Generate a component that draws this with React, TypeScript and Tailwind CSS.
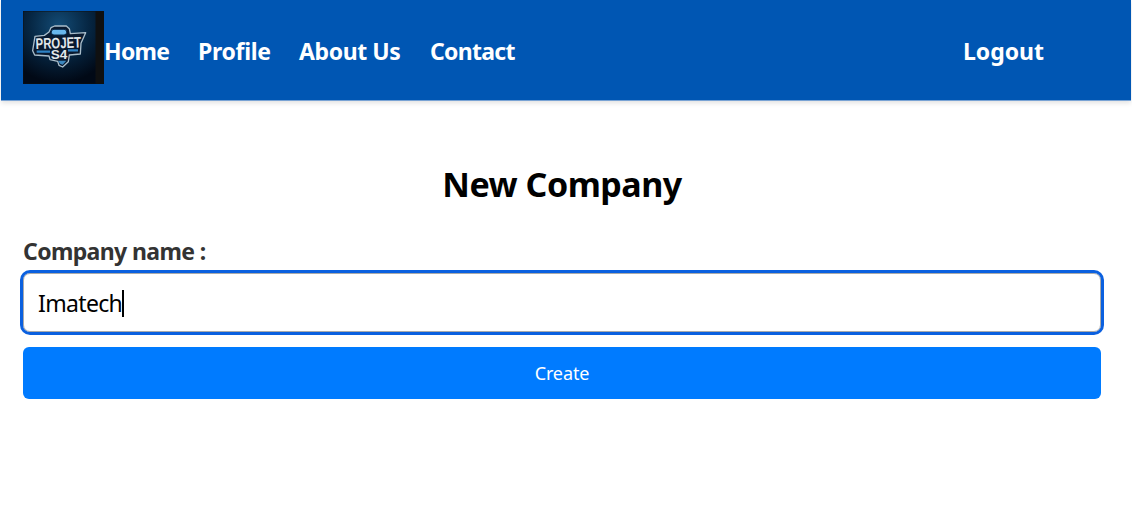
import React from "react";

function Logo() {
  return (
    <svg width="81" height="73" viewBox="0 0 81 73" className="shrink-0" aria-label="Projet S4">
      <defs>
        <radialGradient id="glow" cx="36" cy="14" r="58" gradientUnits="userSpaceOnUse">
          <stop offset="0" stopColor="#134b75" />
          <stop offset="0.5" stopColor="#062744" />
          <stop offset="1" stopColor="#010916" />
        </radialGradient>
      </defs>
      <rect width="81" height="73" fill="#0f1011" />
      <rect x="0.500" y="0.500" width="72" height="72" fill="url(#glow)" />
      <g transform="translate(-23 -11) scale(.33333)">
        <path d="M147 96 153 83 164 78H199L208 86 211 101 257 98 243 130 241 162 208 165 205 185 188 201 177 196 173 184 150 179 147 168 104 165 98 152 105 109 133 106Z" fill="#091a30" stroke="#a9bdca" strokeWidth="4" strokeLinejoin="round" />
        <rect x="154" y="88" width="46" height="17" rx="8" fill="#69b7ec" stroke="#0a2a4a" strokeWidth="3" />
        <path d="M110 155H150M204 151H234" stroke="#2e83c5" strokeWidth="7" />
        <path d="M174 182h25l-11 12-8-3z" fill="#3b86bd" />
        <g fill="#e2e7ea" fontFamily="Liberation Sans, sans-serif" fontWeight="700">
          <text x="107" y="145" fontSize="46" textLength="136" lengthAdjust="spacingAndGlyphs" transform="rotate(-2 175 130)">PROJET</text>
          <text x="152" y="177" fontSize="36" textLength="50" lengthAdjust="spacingAndGlyphs">S4</text>
        </g>
      </g>
    </svg>
  );
}

export default function App() {
  return (
    <div className="h-[528px] w-[1132px] overflow-hidden bg-white px-px font-['Noto_Sans',sans-serif]">
      <header className="flex h-[101px] items-start border-b border-[#79a3d4] bg-[#0056b3] pt-[11px] pl-[22px] text-[23px] leading-8 font-bold text-white shadow-[0_2px_5px_rgba(0,0,0,0.12)]">
        <Logo />
        <nav className="flex flex-1 pt-6 whitespace-nowrap">
          <a className="w-[94px] tracking-[-0.7px]">Home</a>
          <a className="w-[101px] tracking-[-0.3px]">Profile</a>
          <a className="w-[131px] tracking-[-0.4px]">About Us</a>
          <a className="tracking-[-0.7px]">Contact</a>
          <a className="mr-[87px] ml-auto">Logout</a>
        </nav>
      </header>
      <main className="pr-[30px] pl-[22px]">
        <h1 className="mt-[59px] text-center text-[34px] leading-[48px] font-bold tracking-[-0.5px] text-black">New Company</h1>
        <label className="mt-[27px] block text-[23px] leading-8 font-bold tracking-[-0.62px] text-[#333]">Company name :</label>
        <div className="mt-[5px] pt-px">
          <div className="flex h-[59px] items-center rounded-[7px] border border-[#aaa] pt-px pl-[14px] text-[23px] text-black outline-[3px] outline-[#0b60df]">
            <span className="tracking-[-0.65px]">Imatech</span>
            <span className="h-[27px] w-[1.500px] bg-black" />
          </div>
        </div>
        <button className="mt-[15px] block h-[52px] w-full rounded-[6px] bg-[#007bff] text-[18px] tracking-[-0.1px] text-white">Create</button>
      </main>
    </div>
  );
}
